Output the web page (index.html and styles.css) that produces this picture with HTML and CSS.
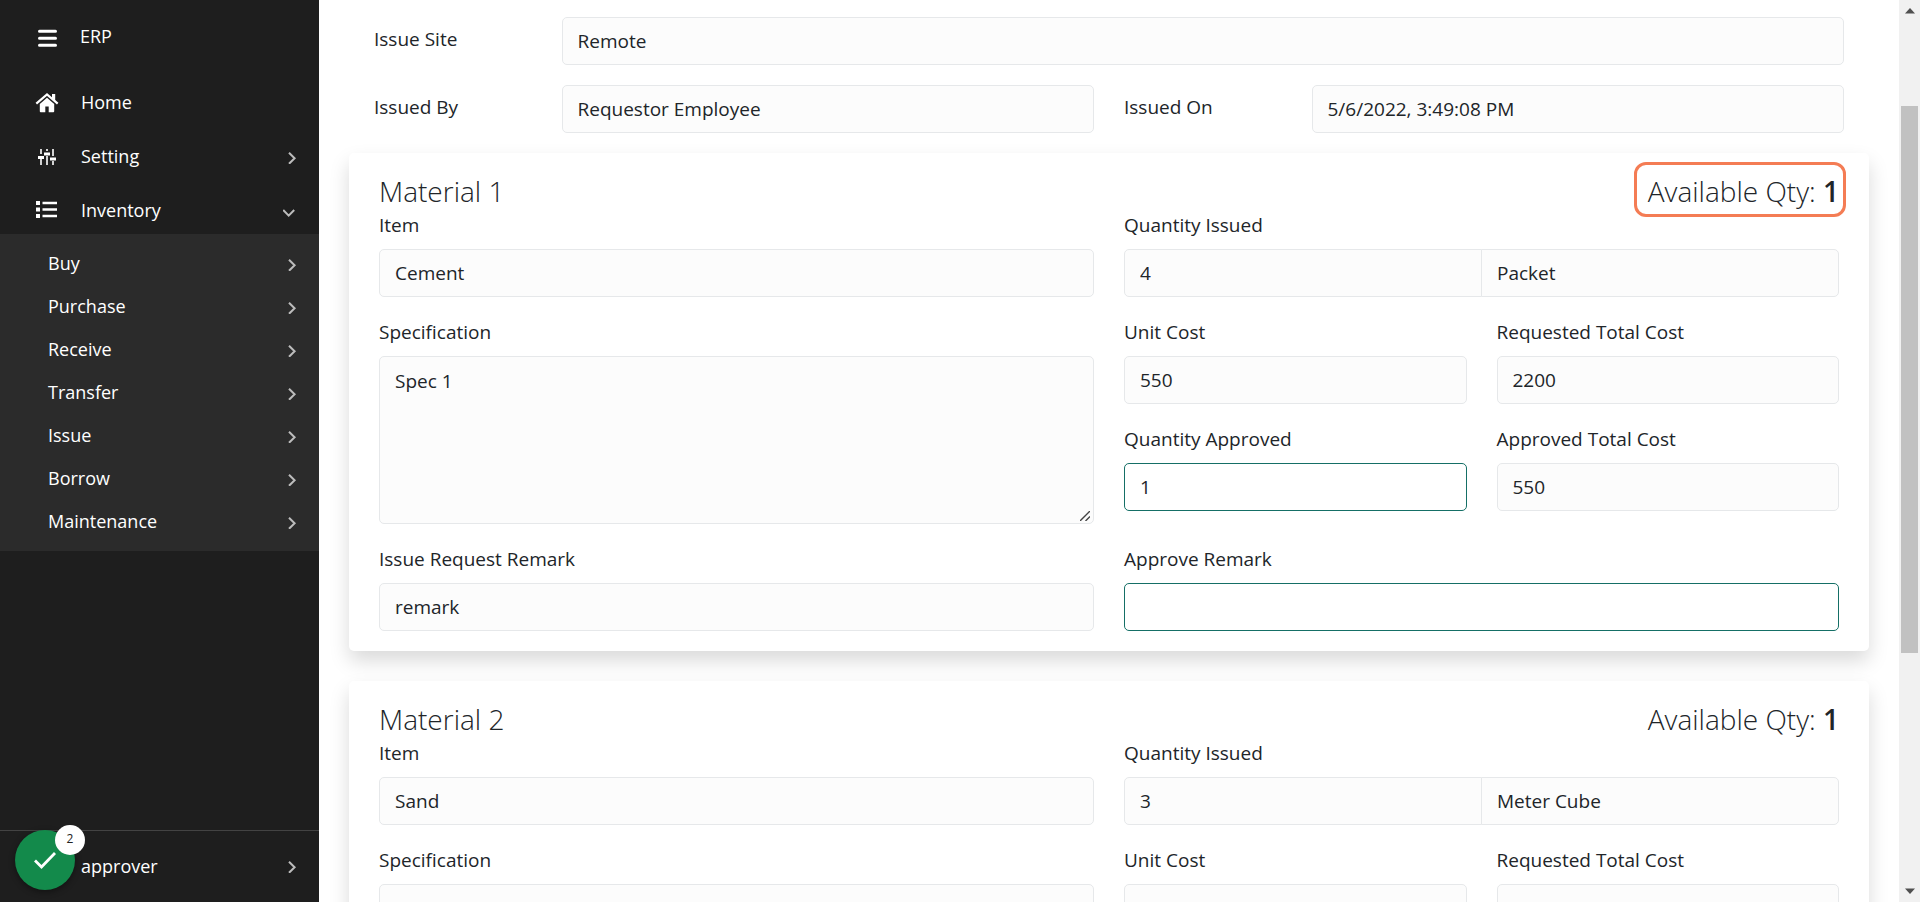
FILE: index.html
```html
<!DOCTYPE html>
<html lang="en">
<head>
<meta charset="utf-8">
<title>ERP</title>
<link rel="stylesheet" href="styles.css">
</head>
<body>
<svg class="defs" aria-hidden="true">
  <symbol id="chevron" viewBox="0 0 14 14"><path d="M6 2.800l5.600 5.500L6 13.800" fill="none" stroke="currentColor" stroke-width="2"/></symbol>
</svg>
<div class="app">
  <nav class="sidebar">
    <header class="brand">
      <button class="icon-button" aria-label="Toggle menu"><svg class="icon" viewBox="0 0 24 24"><path d="M4.500 7.300h16M4.500 14.300h16M4.500 21.200h16" fill="none" stroke="currentColor" stroke-width="3" stroke-linecap="round"/></svg></button>
      <span>ERP</span>
    </header>
    <div class="menu">
      <a class="menu-link" href="#"><svg class="icon" viewBox="0 0 24 24"><path d="M12 6.800L4.800 13v7.300q0 .9.900.9h4.600v-5.600h3.400v5.600h4.600q.9 0 .9-.9V13z" fill="currentColor"/><path d="M1.300 12.600L12 3.500l10.700 9.100" fill="none" stroke="currentColor" stroke-width="2.200"/><path d="M17 3h3.200v7L17 7.300z" fill="currentColor"/></svg><span>Home</span></a>
      <a class="menu-link" href="#"><svg class="icon" viewBox="0 0 24 24"><path d="M6 4v5M6 14v6M12 4v2M12 11v9M18 4v7M18 16v4" fill="none" stroke="currentColor" stroke-width="1.600"/><path d="M3 12.500h6M9 9h6M15 14h6" fill="none" stroke="currentColor" stroke-width="2.800"/></svg><span>Setting</span><svg class="chevron"><use href="#chevron"/></svg></a>
      <a class="menu-link" href="#"><svg class="icon" viewBox="0 0 24 24"><path d="M1 2h4v4H1zM1 8.500h4v4H1zM1 15h4v4H1zM7.500 2.800H22v2.500H7.500zM7.500 9.300H22v2.500H7.500zM7.500 15.800H22v2.500H7.500z" fill="currentColor"/></svg><span>Inventory</span><svg class="chevron open"><use href="#chevron"/></svg></a>
    </div>
    <div class="submenu">
      <a class="submenu-link" href="#"><span>Buy</span><svg class="chevron"><use href="#chevron"/></svg></a>
      <a class="submenu-link" href="#"><span>Purchase</span><svg class="chevron"><use href="#chevron"/></svg></a>
      <a class="submenu-link" href="#"><span>Receive</span><svg class="chevron"><use href="#chevron"/></svg></a>
      <a class="submenu-link" href="#"><span>Transfer</span><svg class="chevron"><use href="#chevron"/></svg></a>
      <a class="submenu-link" href="#"><span>Issue</span><svg class="chevron"><use href="#chevron"/></svg></a>
      <a class="submenu-link" href="#"><span>Borrow</span><svg class="chevron"><use href="#chevron"/></svg></a>
      <a class="submenu-link" href="#"><span>Maintenance</span><svg class="chevron"><use href="#chevron"/></svg></a>
    </div>
    <a class="account" href="#"><span>approver</span><svg class="chevron"><use href="#chevron"/></svg></a>
    <button class="fab" aria-label="Notifications">
      <svg class="icon" viewBox="0 0 24 24"><path d="M2 12.500l6.500 6.500L22 5" fill="none" stroke="currentColor" stroke-width="2.800"/></svg>
      <span class="fab-count">2</span>
    </button>
  </nav>

  <main class="content">
    <section class="summary">
      <label for="site">Issue Site</label>
      <input class="control wide" id="site" value="Remote" readonly>
      <label for="by">Issued By</label>
      <input class="control" id="by" value="Requestor Employee" readonly>
      <label for="on">Issued On</label>
      <input class="control" id="on" value="5/6/2022, 3:49:08 PM" readonly>
    </section>

    <section class="card">
      <header class="card-head"><h2>Material 1</h2><p class="qty highlighted">Available Qty: <b>1</b></p></header>
      <div class="columns">
        <div class="stack">
          <div class="field"><label for="item1">Item</label><input class="control" id="item1" value="Cement" readonly></div>
          <div class="field"><label for="spec1">Specification</label>
            <div class="textarea-box"><textarea class="control" id="spec1" readonly>Spec 1</textarea><svg class="grip" viewBox="0 0 10 10"><path d="M0 10L10 0M5.500 10L10 5.500" fill="none" stroke="currentColor" stroke-width="1.400"/></svg></div></div>
        </div>
        <div class="stack">
          <div class="field"><label for="qty1">Quantity Issued</label>
            <div class="group"><input class="control" id="qty1" value="4" readonly><input class="control" aria-label="Unit" value="Packet" readonly></div></div>
          <div class="columns">
            <div class="field"><label for="unit1">Unit Cost</label><input class="control" id="unit1" value="550" readonly></div>
            <div class="field"><label for="req1">Requested Total Cost</label><input class="control" id="req1" value="2200" readonly></div>
            <div class="field"><label for="app1">Quantity Approved</label><input class="control editable" id="app1" value="1"></div>
            <div class="field"><label for="tot1">Approved Total Cost</label><input class="control" id="tot1" value="550" readonly></div>
          </div>
        </div>
        <div class="field"><label for="rem1">Issue Request Remark</label><input class="control" id="rem1" value="remark" readonly></div>
        <div class="field"><label for="arem1">Approve Remark</label><input class="control editable" id="arem1"></div>
      </div>
    </section>

    <section class="card">
      <header class="card-head"><h2>Material 2</h2><p class="qty">Available Qty: <b>1</b></p></header>
      <div class="columns">
        <div class="stack">
          <div class="field"><label for="item2">Item</label><input class="control" id="item2" value="Sand" readonly></div>
          <div class="field"><label for="spec2">Specification</label><textarea class="control" id="spec2" readonly></textarea></div>
        </div>
        <div class="stack">
          <div class="field"><label for="qty2">Quantity Issued</label>
            <div class="group"><input class="control" id="qty2" value="3" readonly><input class="control" aria-label="Unit" value="Meter Cube" readonly></div></div>
          <div class="columns">
            <div class="field"><label for="unit2">Unit Cost</label><input class="control" id="unit2" readonly></div>
            <div class="field"><label for="req2">Requested Total Cost</label><input class="control" id="req2" readonly></div>
          </div>
        </div>
      </div>
    </section>
  </main>

  <div class="scrollbar" aria-hidden="true">
    <svg class="arrow" viewBox="0 0 10 6"><path d="M0 5.500h10L5 0z" fill="currentColor"/></svg>
    <div class="track"><div class="thumb"></div></div>
    <svg class="arrow" viewBox="0 0 10 6"><path d="M0 .5h10L5 6z" fill="currentColor"/></svg>
  </div>
</div>
</body>
</html>
```
FILE: styles.css
```css
* { box-sizing: border-box; }

body {
  margin: 0;
  font: 19px/30px "Segoe UI", "Open Sans", "Noto Sans", sans-serif;
  color: #212529;
  background: #fff;
}

h2, p { margin: 0; }
a { color: inherit; text-decoration: none; }
button { font: inherit; border: 0; padding: 0; cursor: pointer; }
.defs { position: absolute; width: 0; height: 0; }

.app { display: flex; height: 100vh; overflow: hidden; }

/* Sidebar */
.sidebar {
  position: relative;
  display: flex;
  flex-direction: column;
  flex: 0 0 319px;
  background: #1e1e1e;
  color: #fff;
  font-size: 18px;
}
.icon { display: block; width: 24px; height: 24px; }
.brand { display: flex; align-items: center; gap: 21px; height: 72px; padding-left: 35px; }
.icon-button { color: inherit; background: none; }
.menu { display: flex; flex-direction: column; gap: 8px; padding-top: 8px; }
.menu-link { display: flex; align-items: center; gap: 22px; height: 46px; padding: 0 22px 0 35px; }
.menu-link span, .submenu-link span { padding-bottom: 2px; }
.submenu { padding: 8px 0; background: #2b2b2b; }
.submenu-link { display: flex; align-items: center; height: 43px; padding: 0 22px 0 48px; }
.chevron { width: 14px; height: 14px; margin-left: auto; color: #bcbcbc; }
.chevron.open { transform: rotate(90deg); }
.account {
  display: flex;
  align-items: center;
  height: 72px;
  margin-top: auto;
  padding: 0 22px 2px 81px;
  border-top: 1px solid #434343;
}
.fab {
  position: absolute;
  left: 15px;
  bottom: 12px;
  display: grid;
  place-items: center;
  width: 60px;
  height: 60px;
  border-radius: 50%;
  color: #fff;
  background: #138a4b;
  box-shadow: 0 2px 6px rgba(0, 0, 0, .4);
}
.fab-count {
  position: absolute;
  top: -5px;
  right: -10px;
  width: 30px;
  height: 30px;
  border-radius: 50%;
  font-size: 12px;
  line-height: 28px;
  color: #222;
  background: #fff;
}

/* Form */
.content {
  display: flex;
  flex-direction: column;
  flex: 1;
  gap: 30px;
  min-width: 0;
  padding: 17px 30px 0;
}
.content > * { flex-shrink: 0; }
.summary {
  display: grid;
  grid-template-columns: 21fr 71fr 21fr 71fr;
  gap: 20px 30px;
  margin-bottom: -10px;
  padding: 0 25px;
}
.summary label { padding-top: 7px; }
.wide { grid-column: span 3; }

.control {
  display: block;
  width: 100%;
  min-width: 0;
  height: 48px;
  padding: 9px 15px;
  border: 1px solid #e6e8ea;
  border-radius: 5px;
  font: inherit;
  color: inherit;
  background: #fcfcfc;
  outline: 0;
}
textarea.control { height: 168px; resize: none; }
.textarea-box { position: relative; }
.grip { position: absolute; right: 4px; bottom: 3px; width: 10px; height: 10px; color: #444; }
.editable { border-color: #156f66; background: #fff; }

.card {
  padding: 20px 30px;
  border-radius: 5px;
  background: #fff;
  box-shadow: 0 10px 20px rgba(0, 0, 0, .15);
}
.card-head { display: flex; justify-content: space-between; font-size: 28px; line-height: 37px; }
.card-head h2, .qty { font-size: inherit; font-weight: 300; }
.qty b { font-weight: 600; }
.highlighted { position: relative; }
.highlighted::after {
  content: "";
  position: absolute;
  inset: -11px -7px -7px -14px;
  border: 3px solid #f47c54;
  border-radius: 12px;
}
.columns { display: grid; grid-template-columns: 1fr 1fr; gap: 20px 30px; }
.stack { display: flex; flex-direction: column; gap: 20px; }
.field { display: flex; flex-direction: column; gap: 9px; min-width: 0; }
.group { display: flex; }
.group .control:first-child { border-radius: 5px 0 0 5px; }
.group .control:last-child { margin-left: -1px; border-radius: 0 5px 5px 0; }

/* Scrollbar */
.scrollbar {
  display: flex;
  flex-direction: column;
  align-items: center;
  flex: 0 0 21px;
  padding: 8px 0;
  color: #505050;
  background: #f1f1f1;
}
.arrow { width: 10px; height: 6px; }
.track { flex: 1; width: 17px; padding-top: 92px; }
.thumb { height: 70%; background: #c1c1c1; }
```
